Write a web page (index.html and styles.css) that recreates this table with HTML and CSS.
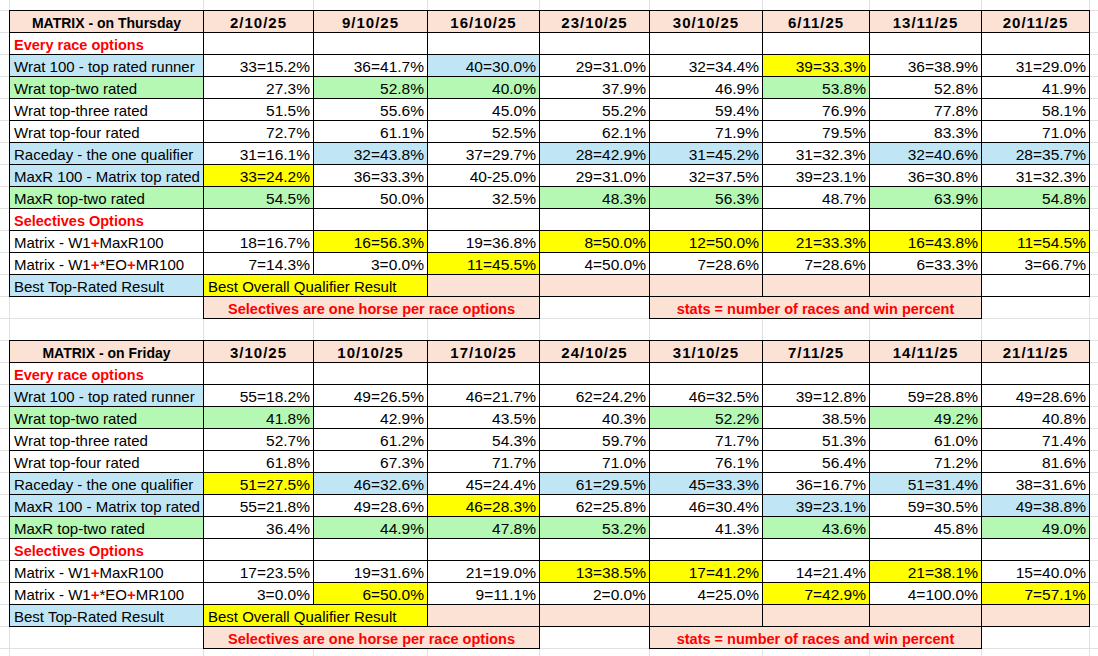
FILE: index.html
```html
<!DOCTYPE html>
<html lang="en">
<head>
<meta charset="utf-8">
<title>MATRIX results</title>
<link rel="stylesheet" href="styles.css">
</head>
<body>
<div class="sheet">
  <table class="mx">
    <colgroup>
      <col class="w1"><col class="w2"><col class="w3"><col class="w4"><col class="w5"><col class="w6"><col class="w7"><col class="w8"><col class="w9">
    </colgroup>
    <tr class="hd"><th class="l0 title">MATRIX - on Thursday</th><th>2/10/25</th><th>9/10/25</th><th>16/10/25</th><th>23/10/25</th><th>30/10/25</th><th>6/11/25</th><th>13/11/25</th><th>20/11/25</th></tr>
    <tr><td class="l0 l sec">Every race options</td><td></td><td></td><td></td><td></td><td></td><td></td><td></td><td></td></tr>
    <tr><td class="l0 l b">Wrat 100 - top rated runner</td><td>33=15.2%</td><td>36=41.7%</td><td class="b">40=30.0%</td><td>29=31.0%</td><td>32=34.4%</td><td class="y">39=33.3%</td><td>36=38.9%</td><td>31=29.0%</td></tr>
    <tr><td class="l0 l g">Wrat top-two rated</td><td>27.3%</td><td class="g">52.8%</td><td class="g">40.0%</td><td>37.9%</td><td>46.9%</td><td class="g">53.8%</td><td>52.8%</td><td>41.9%</td></tr>
    <tr><td class="l0 l">Wrat top-three rated</td><td>51.5%</td><td>55.6%</td><td>45.0%</td><td>55.2%</td><td>59.4%</td><td>76.9%</td><td>77.8%</td><td>58.1%</td></tr>
    <tr><td class="l0 l">Wrat top-four rated</td><td>72.7%</td><td>61.1%</td><td>52.5%</td><td>62.1%</td><td>71.9%</td><td>79.5%</td><td>83.3%</td><td>71.0%</td></tr>
    <tr><td class="l0 l b">Raceday - the one qualifier</td><td>31=16.1%</td><td class="b">32=43.8%</td><td>37=29.7%</td><td class="b">28=42.9%</td><td class="b">31=45.2%</td><td>31=32.3%</td><td class="b">32=40.6%</td><td class="b">28=35.7%</td></tr>
    <tr><td class="l0 l b">MaxR 100 - Matrix top rated</td><td class="y">33=24.2%</td><td>36=33.3%</td><td>40-25.0%</td><td>29=31.0%</td><td>32=37.5%</td><td>39=23.1%</td><td>36=30.8%</td><td>31=32.3%</td></tr>
    <tr><td class="l0 l g">MaxR top-two rated</td><td class="g">54.5%</td><td>50.0%</td><td>32.5%</td><td class="g">48.3%</td><td class="g">56.3%</td><td>48.7%</td><td class="g">63.9%</td><td class="g">54.8%</td></tr>
    <tr><td class="l0 l sec">Selectives Options</td><td></td><td></td><td></td><td></td><td></td><td></td><td></td><td></td></tr>
    <tr><td class="l0 l">Matrix - W1<span class="plus">+</span>MaxR100</td><td>18=16.7%</td><td class="y">16=56.3%</td><td>19=36.8%</td><td class="y">8=50.0%</td><td class="y">12=50.0%</td><td class="y">21=33.3%</td><td class="y">16=43.8%</td><td class="y">11=54.5%</td></tr>
    <tr><td class="l0 l">Matrix - W1<span class="plus">+</span>*EO<span class="plus">+</span>MR100</td><td>7=14.3%</td><td>3=0.0%</td><td class="y">11=45.5%</td><td>4=50.0%</td><td>7=28.6%</td><td>7=28.6%</td><td>6=33.3%</td><td>3=66.7%</td></tr>
    <tr><td class="l0 l b">Best Top-Rated Result</td><td colspan="2" class="l y">Best Overall Qualifier Result</td><td class="p"></td><td class="p"></td><td class="p"></td><td class="p"></td><td class="p"></td><td></td></tr>
    <tr class="lg"><td class="edge"></td><td colspan="3" class="note">Selectives are one horse per race options</td><td class="edge"></td><td colspan="3" class="note">stats = number of races and win percent</td><td></td></tr>
  </table>

  <table class="mx second">
    <colgroup>
      <col class="w1"><col class="w2"><col class="w3"><col class="w4"><col class="w5"><col class="w6"><col class="w7"><col class="w8"><col class="w9">
    </colgroup>
    <tr class="hd"><th class="l0 title">MATRIX - on Friday</th><th>3/10/25</th><th>10/10/25</th><th>17/10/25</th><th>24/10/25</th><th>31/10/25</th><th>7/11/25</th><th>14/11/25</th><th>21/11/25</th></tr>
    <tr><td class="l0 l sec">Every race options</td><td></td><td></td><td></td><td></td><td></td><td></td><td></td><td></td></tr>
    <tr><td class="l0 l b">Wrat 100 - top rated runner</td><td>55=18.2%</td><td>49=26.5%</td><td>46=21.7%</td><td>62=24.2%</td><td>46=32.5%</td><td>39=12.8%</td><td>59=28.8%</td><td>49=28.6%</td></tr>
    <tr><td class="l0 l g">Wrat top-two rated</td><td class="g">41.8%</td><td>42.9%</td><td>43.5%</td><td>40.3%</td><td class="g">52.2%</td><td>38.5%</td><td class="g">49.2%</td><td>40.8%</td></tr>
    <tr><td class="l0 l">Wrat top-three rated</td><td>52.7%</td><td>61.2%</td><td>54.3%</td><td>59.7%</td><td>71.7%</td><td>51.3%</td><td>61.0%</td><td>71.4%</td></tr>
    <tr><td class="l0 l">Wrat top-four rated</td><td>61.8%</td><td>67.3%</td><td>71.7%</td><td>71.0%</td><td>76.1%</td><td>56.4%</td><td>71.2%</td><td>81.6%</td></tr>
    <tr><td class="l0 l b">Raceday - the one qualifier</td><td class="y">51=27.5%</td><td class="b">46=32.6%</td><td>45=24.4%</td><td class="b">61=29.5%</td><td class="b">45=33.3%</td><td>36=16.7%</td><td class="b">51=31.4%</td><td>38=31.6%</td></tr>
    <tr><td class="l0 l b">MaxR 100 - Matrix top rated</td><td>55=21.8%</td><td>49=28.6%</td><td class="y">46=28.3%</td><td>62=25.8%</td><td>46=30.4%</td><td class="b">39=23.1%</td><td>59=30.5%</td><td class="b">49=38.8%</td></tr>
    <tr><td class="l0 l g">MaxR top-two rated</td><td>36.4%</td><td class="g">44.9%</td><td class="g">47.8%</td><td class="g">53.2%</td><td>41.3%</td><td class="g">43.6%</td><td>45.8%</td><td class="g">49.0%</td></tr>
    <tr><td class="l0 l sec">Selectives Options</td><td></td><td></td><td></td><td></td><td></td><td></td><td></td><td></td></tr>
    <tr><td class="l0 l">Matrix - W1<span class="plus">+</span>MaxR100</td><td>17=23.5%</td><td>19=31.6%</td><td>21=19.0%</td><td class="y">13=38.5%</td><td class="y">17=41.2%</td><td>14=21.4%</td><td class="y">21=38.1%</td><td>15=40.0%</td></tr>
    <tr><td class="l0 l">Matrix - W1<span class="plus">+</span>*EO<span class="plus">+</span>MR100</td><td>3=0.0%</td><td class="y">6=50.0%</td><td>9=11.1%</td><td>2=0.0%</td><td>4=25.0%</td><td class="y">7=42.9%</td><td>4=100.0%</td><td class="y">7=57.1%</td></tr>
    <tr><td class="l0 l b">Best Top-Rated Result</td><td colspan="2" class="l y">Best Overall Qualifier Result</td><td class="p"></td><td class="p"></td><td class="p"></td><td class="p"></td><td class="p"></td><td class="p"></td></tr>
    <tr class="lg"><td class="edge"></td><td colspan="3" class="note">Selectives are one horse per race options</td><td class="edge"></td><td colspan="3" class="note">stats = number of races and win percent</td><td></td></tr>
  </table>
</div>
</body>
</html>
```

FILE: styles.css
```css
html, body {
  margin: 0;
  padding: 0;
  background: #ffffff;
}

body {
  font-family: "Liberation Sans", Arial, sans-serif;
  font-size: 15px;
  color: #000000;
}

.sheet {
  width: 1098px;
  height: 656px;
  overflow: hidden;
  box-sizing: border-box;
  padding: 10px 0 0 9px;
  background-color: #ffffff;
  background-image:
    linear-gradient(#e1e1e1, #e1e1e1),
    linear-gradient(#e1e1e1, #e1e1e1),
    linear-gradient(#e1e1e1, #e1e1e1),
    linear-gradient(#e1e1e1, #e1e1e1),
    linear-gradient(#e1e1e1, #e1e1e1),
    linear-gradient(#e1e1e1, #e1e1e1),
    linear-gradient(#e1e1e1, #e1e1e1),
    linear-gradient(#e1e1e1, #e1e1e1),
    linear-gradient(#e1e1e1, #e1e1e1),
    linear-gradient(#e1e1e1, #e1e1e1),
    linear-gradient(to bottom, #e1e1e1 0, #e1e1e1 1px, transparent 1px);
  background-size:
    1px 100%, 1px 100%, 1px 100%, 1px 100%, 1px 100%,
    1px 100%, 1px 100%, 1px 100%, 1px 100%, 1px 100%,
    100% 22px;
  background-position:
    9px 0, 203px 0, 313px 0, 427px 0, 539px 0,
    649px 0, 762px 0, 869px 0, 981px 0, 1089px 0,
    0 10px;
  background-repeat:
    no-repeat, no-repeat, no-repeat, no-repeat, no-repeat,
    no-repeat, no-repeat, no-repeat, no-repeat, no-repeat,
    repeat-y;
}

.mx {
  border-collapse: separate;
  border-spacing: 0;
  table-layout: fixed;
  width: 1081px;
}

.mx.second {
  margin-top: 21px;
}

.w1 { width: 195px; }
.w2 { width: 110px; }
.w3 { width: 114px; }
.w4 { width: 112px; }
.w5 { width: 110px; }
.w6 { width: 113px; }
.w7 { width: 107px; }
.w8 { width: 112px; }
.w9 { width: 108px; }

.mx tr {
  height: 22px;
}

.mx tr.hd {
  height: 23px;
}

.mx td,
.mx th {
  padding: 3px 3px 0 3px;
  border-right: 1px solid #000000;
  border-bottom: 1px solid #000000;
  background: #ffffff;
  text-align: right;
  white-space: nowrap;
  overflow: hidden;
  line-height: 18px;
  font-size: 15.5px;
  font-weight: normal;
  vertical-align: middle;
}

.mx .l0 {
  border-left: 1px solid #000000;
}

.mx .hd th {
  padding-top: 2px;
  border-top: 1px solid #000000;
  background: #fbe2d5;
  font-size: 15px;
  font-weight: bold;
  text-align: center;
  letter-spacing: 1px;
}

.mx .hd th.title {
  font-size: 14px;
  letter-spacing: 0;
}

.mx td.l {
  text-align: left;
  padding-left: 4px;
  font-size: 15px;
}

.mx td.sec {
  color: #ff0000;
  font-weight: bold;
  font-size: 14.5px;
}

.plus {
  color: #ff0000;
  font-weight: bold;
}

.mx td.b { background: #c0e6f5; }
.mx td.g { background: #b4f8b4; }
.mx td.y { background: #ffff00; }
.mx td.p { background: #fbe2d5; }

.mx .lg td {
  background: transparent;
  border: none;
}

.mx .lg td.edge {
  border-right: 1px solid #000000;
}

.mx .lg td.note {
  background: #fbe2d5;
  border-right: 1px solid #000000;
  border-bottom: 1px solid #000000;
  color: #ff0000;
  font-weight: bold;
  font-size: 14.5px;
  text-align: center;
}
```
